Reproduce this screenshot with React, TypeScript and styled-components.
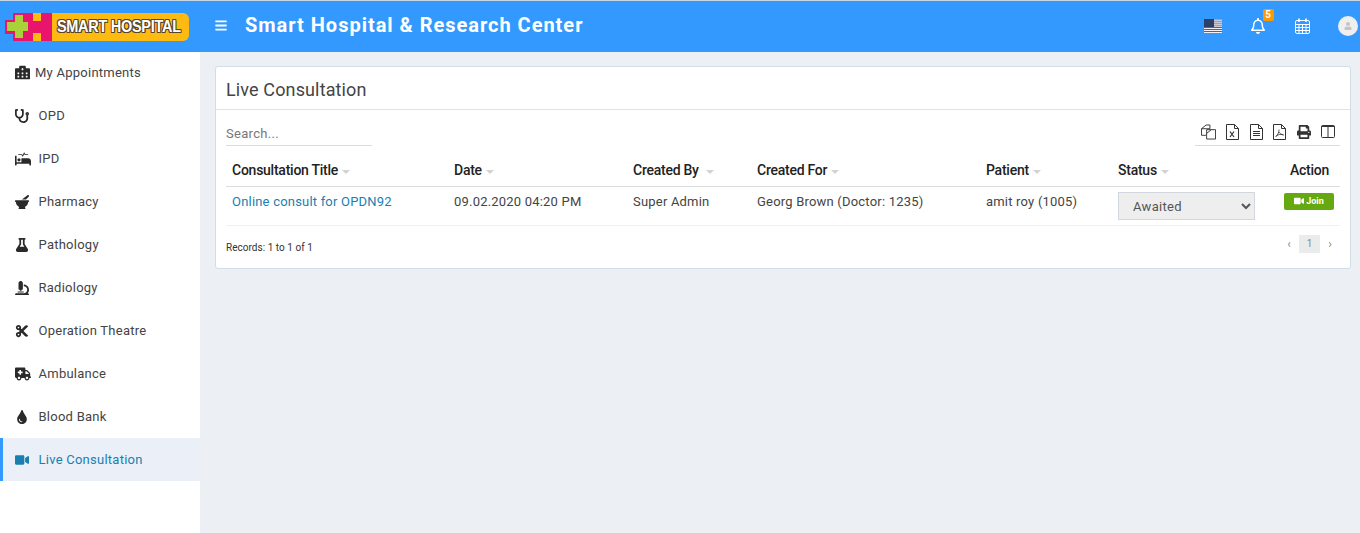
import styled, { createGlobalStyle } from 'styled-components';
import type { ReactNode } from 'react';
import {
  FaBars, FaRegBell, FaHospitalAlt, FaStethoscope, FaProcedures, FaMortarPestle,
  FaFlask, FaMicroscope, FaCut, FaAmbulance, FaTint, FaVideo, FaPrint, FaUser,
} from 'react-icons/fa';

const GlobalStyle = createGlobalStyle`
  html, body { margin: 0; padding: 0; height: 100%; overflow: hidden; }
  body { font-family: Roboto, "Liberation Sans", sans-serif; background: #ecf0f5; color: #333; }
  * { box-sizing: border-box; }
`;

const Page = styled('div')`
  display: flex;
  flex-direction: column;
  height: 533px;
  border-top: 1px solid #c9d6e4;
`;

const Header = styled('header')`
  height: 51px;
  flex: none;
  background: #3399ff;
  display: flex;
  align-items: center;
  color: #fff;
  position: relative;
  z-index: 1;
`;

const Logo = styled('div')`
  width: 200px;
  padding-left: 5px;
  display: flex;
  align-items: center;
`;

const LogoPill = styled('div')`
  height: 28px;
  width: 137px;
  background: #fdbb12;
  border-radius: 0 6px 6px 0;
  display: flex;
  align-items: center;
  justify-content: center;
  padding-right: 3px;
`;

const LogoText = styled('span')`
  font-family: "Liberation Sans", sans-serif;
  font-weight: 700;
  font-size: 17px;
  letter-spacing: -0.3px;
  white-space: nowrap;
  color: #fff;
  transform: scaleX(0.85);
  text-shadow: -1px 0 #54452d, 1px 0 #54452d, 0 -1px #54452d, 0 1px #54452d, 1px 1px #54452d, -1px -1px #54452d, 1px -1px #54452d, -1px 1px #54452d;
`;

const MenuToggle = styled('button')`
  border: 0;
  background: none;
  color: #fff;
  padding: 0;
  margin: 0 0 3px 15px;
  width: 12px;
  height: 14px;
  display: flex;
  font-size: 13px;
  align-items: center;
`;

const Brand = styled('div')`
  margin: 0 0 3px 18px;
  font-size: 20px;
  font-weight: 700;
  letter-spacing: 0.98px;
  white-space: nowrap;
`;

const TopActions = styled('div')`
  margin: 0 0 1px auto;
  display: flex;
  align-items: center;
`;

const TopAction = styled('div')<{ $width: number }>`
  width: ${props => props.$width}px;
  display: flex;
  justify-content: center;
  align-items: center;
  position: relative;
  font-size: 16px;
`;

const NoticeBadge = styled('span')`
  position: absolute;
  top: -9px;
  right: 6.5px;
  width: 11px;
  height: 12px;
  border-radius: 2px;
  background: #ff9800;
  color: #fff;
  font-size: 10px;
  font-weight: 700;
  line-height: 12px;
  text-align: center;
`;

const Avatar = styled('div')`
  width: 20px;
  height: 20px;
  margin-left: 11px;
  border-radius: 50%;
  background: #efefef;
  color: #c4c4c4;
  font-size: 8px;
  display: flex;
  align-items: center;
  justify-content: center;
`;

const Body = styled('div')`
  display: flex;
  flex: 1;
  min-height: 0;
`;

const Sidebar = styled('nav')`
  width: 200px;
  flex: none;
  background: #fff;
`;

const Menu = styled('ul')`
  list-style: none;
  margin: -1px 0 0;
  padding: 0;
`;

const MenuItem = styled('li')<{ $active?: boolean }>`
  height: 43px;
  display: flex;
  align-items: center;
  padding-left: ${props => props.$active ? 12 : 15}px;
  border-left: ${props => props.$active ? '3px solid #3399ff' : '0'};
  background: ${props => props.$active ? '#ebeff7' : 'transparent'};
  color: ${props => props.$active ? '#187fb0' : '#444'};
  font-size: 13px;
  letter-spacing: 0.25px;
  white-space: nowrap;
`;

const MenuIcon = styled('span')<{ $wide?: boolean; $size?: number; $active?: boolean }>`
  width: ${props => props.$wide ? 20 : 23.5}px;
  flex: none;
  display: flex;
  align-items: center;
  font-size: ${props => props.$size ?? 14}px;
  color: ${props => props.$active ? '#187fb0' : '#2a2a2a'};
`;

const Main = styled('main')`
  flex: 1;
  padding: 14px 9px 0 15px;
`;

const Card = styled('section')`
  background: #fff;
  border: 1px solid #d2dde6;
  border-radius: 3px;
`;

const CardHeader = styled('div')`
  height: 43px;
  padding: 2px 0 0 10px;
  display: flex;
  align-items: center;
  border-bottom: 1px solid #dfe3e7;
`;

const CardTitle = styled('h3')`
  margin: 0;
  font-size: 18px;
  font-weight: 400;
  letter-spacing: 0.13px;
  color: #444;
`;

const CardBody = styled('div')`
  padding: 0 10px;
`;

const TableTools = styled('div')`
  display: flex;
  justify-content: space-between;
  align-items: flex-end;
  height: 36px;
`;

const SearchInput = styled('input')`
  width: 146px;
  height: 25px;
  border: 0;
  border-bottom: 1px solid #dcdcdc;
  padding: 0;
  outline: 0;
  font: 400 13px Roboto, sans-serif;
  letter-spacing: 0.3px;
  &::placeholder { color: #777; opacity: 1; }
`;

const ExportButtons = styled('div')`
  width: 145px;
  height: 27px;
  display: flex;
  justify-content: flex-end;
  align-items: flex-start;
  gap: 8.8px;
  padding: 5px 5px 0 0;
  border-bottom: 1px solid #dcdcdc;
  color: #333;
`;

const ExportButton = styled('span')`
  width: 15px;
  height: 15px;
  display: flex;
  justify-content: center;
  align-items: center;
  font-size: 14px;
`;

const Table = styled('table')`
  width: 100%;
  border-collapse: collapse;
  table-layout: fixed;
`;

const Th = styled('th')<{ $width: number; $right?: boolean }>`
  width: ${props => props.$width}px;
  height: 40px;
  padding: 9px 6px 0;
  border-bottom: 1px solid #ddd;
  font-size: 14px;
  font-weight: 500;
  letter-spacing: -0.25px;
  color: #222;
  text-align: ${props => props.$right ? 'right' : 'left'};
  padding-right: ${props => props.$right ? 11 : 6}px;
  white-space: nowrap;
`;

const SortCaret = styled('span')<{ $gap?: number }>`
  display: inline-block;
  margin-left: ${props => props.$gap ?? 4}px;
  vertical-align: middle;
  width: 0;
  height: 0;
  border-left: 4.5px solid transparent;
  border-right: 4.5px solid transparent;
  border-top: 4.5px solid #d2d2d2;
`;

const Td = styled('td')`
  height: 39px;
  padding: 0 6px 9px;
  font-size: 13px;
  letter-spacing: 0.2px;
  color: #444;
  border-bottom: 1px solid #f0f0f0;
  white-space: nowrap;
  vertical-align: middle;
`;

const SelectTd = styled(Td)`
  padding-top: 5px;
  padding-bottom: 5px;
`;

const ActionTd = styled(Td)`
  text-align: right;
`;

const Link = styled('a')`
  color: #187fb0;
  text-decoration: none;
`;

const StatusSelect = styled('select')`
  width: 137px;
  height: 28px;
  border: 1px solid #d2d6de;
  background: #eee;
  color: #555;
  font: 400 13px Roboto, sans-serif;
  letter-spacing: 0.3px;
  padding: 2px 0 0 10px;
  border-radius: 0;
`;

const JoinButton = styled('button')`
  width: 50px;
  height: 17px;
  border: 0;
  border-radius: 2px;
  background: #66a80f;
  color: #fff;
  font: 700 9px Roboto, sans-serif;
  display: inline-flex;
  align-items: center;
  justify-content: center;
  gap: 2px;
  padding: 0;
  & svg { width: 10px; height: 10px; }
`;

const TableFooter = styled('div')`
  height: 42px;
  padding-top: 2px;
  display: flex;
  justify-content: space-between;
  align-items: center;
  font-size: 10px;
  letter-spacing: 0.03px;
  color: #333;
`;

const Pager = styled('div')`
  display: flex;
  align-items: center;
  font-size: 10px;
  color: #888;
  margin: 0 2.5px 8px 0;
`;

const PageArrow = styled('span')`
  width: 15px;
  text-align: center;
  font-size: 12px;
`;

const PageNumber = styled('span')`
  width: 21px;
  height: 18px;
  background: #eaecec;
  text-align: center;
  line-height: 18px;
  margin: 0 2.5px;
`;

const FlagIcon = () => (
  <svg width="18" height="14" viewBox="0 0 18 14">
    {[0, 1, 2, 3, 4, 5, 6].map((i) => (
      <rect key={i} x="0" y={i * 2} width="18" height="1" fill="#c0394b" />
    ))}
    {[0, 1, 2, 3, 4, 5, 6].map((i) => (
      <rect key={i} x="0" y={i * 2 + 1} width="18" height="1" fill="#f2eef2" />
    ))}
    <rect x="10" y="0" width="8" height="8" fill="#b9bccb" opacity="0.7" />
    <rect x="0" y="0" width="10" height="8" fill="#2f4068" />
  </svg>
);

const LogoMark = () => (
  <svg width="47" height="28" viewBox="0 0 47 28">
    <path d="M8 0h39v28H8v-7H0V7h8z" fill="#e9156d" />
    <rect x="28" y="0" width="8" height="8" fill="#fdbb12" />
    <rect x="28" y="20" width="8" height="8" fill="#fdbb12" />
    <path d="M10 2h8v7h5v9h-5v7h-8v-7H2V9h8z" fill="#a8d13a" />
  </svg>
);

const CalendarIcon = () => (
  <svg width="15" height="16" viewBox="0 0 15 16" fill="none" stroke="#fff">
    <rect x="0.5" y="2.500" width="14" height="13" rx="1.500" />
    <path d="M0.500 6.500h14M0.500 9.500h14M0.500 12.500h14M4 6.500v9M7.500 6.500v9M11 6.500v9" />
    <path d="M4 0.500v3.500M11 0.500v3.500" strokeWidth="1.600" />
  </svg>
);

const FileShape = ({ children }: { children?: ReactNode }) => (
  <svg width="13" height="16" viewBox="0 0 13 16" fill="none" stroke="#333">
    <path d="M0.500 0.500h8l4 4v11h-12zM8.500 0.500v4h4" />
    {children}
  </svg>
);

const CopyIcon = () => (
  <svg width="16" height="16" viewBox="0 0 16 16" fill="none" stroke="#333">
    <path d="M5.500 0.500h4v4h-4l-5 0v7h5" />
    <path d="M5.500 0.500l-5 4" />
    <path d="M6 5.500h9.500v10h-9.500zM11 5.500l-5 4" />
  </svg>
);

const ColumnsIcon = () => (
  <svg width="14" height="13" viewBox="0 0 14 13" fill="none" stroke="#333">
    <rect x="0.500" y="0.500" width="13" height="12" rx="1" />
    <path d="M7 0.500v12M0.500 1.500h13" />
  </svg>
);

const menu: { label: string; icon: ReactNode; wide?: boolean; size?: number }[] = [
  { label: 'My Appointments', icon: <FaHospitalAlt />, wide: true, size: 15 },
  { label: 'OPD', icon: <FaStethoscope /> },
  { label: 'IPD', icon: <FaProcedures />, size: 16 },
  { label: 'Pharmacy', icon: <FaMortarPestle /> },
  { label: 'Pathology', icon: <FaFlask /> },
  { label: 'Radiology', icon: <FaMicroscope /> },
  { label: 'Operation Theatre', icon: <FaCut /> },
  { label: 'Ambulance', icon: <FaAmbulance />, size: 16 },
  { label: 'Blood Bank', icon: <FaTint /> },
];

const App = () => {
  return (
    <Page>
      <GlobalStyle />
      <Header>
        <Logo>
          <LogoMark />
          <LogoPill><LogoText>SMART HOSPITAL</LogoText></LogoPill>
        </Logo>
        <MenuToggle><FaBars /></MenuToggle>
        <Brand>Smart Hospital &amp; Research Center</Brand>
        <TopActions>
          <TopAction $width={45}><FlagIcon /></TopAction>
          <TopAction $width={45}><FaRegBell /><NoticeBadge>5</NoticeBadge></TopAction>
          <TopAction $width={45}><CalendarIcon /></TopAction>
          <TopAction $width={35}><Avatar><FaUser /></Avatar></TopAction>
        </TopActions>
      </Header>
      <Body>
        <Sidebar>
          <Menu>
            {menu.map((item) => (
              <MenuItem key={item.label}>
                <MenuIcon $wide={item.wide} $size={item.size}>{item.icon}</MenuIcon>
                {item.label}
              </MenuItem>
            ))}
            <MenuItem $active>
              <MenuIcon $active><FaVideo /></MenuIcon>
              Live Consultation
            </MenuItem>
          </Menu>
        </Sidebar>
        <Main>
          <Card>
            <CardHeader><CardTitle>Live Consultation</CardTitle></CardHeader>
            <CardBody>
              <TableTools>
                <SearchInput placeholder="Search..." />
                <ExportButtons>
                  <ExportButton><CopyIcon /></ExportButton>
                  <ExportButton>
                    <FileShape>
                      <path d="M4 7.500l4 5.500M8 7.500l-4 5.500" strokeWidth="1.200" />
                    </FileShape>
                  </ExportButton>
                  <ExportButton>
                    <FileShape>
                      <path d="M3 7.500h7M3 9.500h7M3 11.500h7" />
                    </FileShape>
                  </ExportButton>
                  <ExportButton>
                    <FileShape>
                      <path d="M6 5.500c0 3-1.500 6-3.500 7.500M6 8c1 2 2.500 3 5 3M3 12c2-1.500 5-2 7-1.500" strokeWidth="0.800" />
                    </FileShape>
                  </ExportButton>
                  <ExportButton><FaPrint /></ExportButton>
                  <ExportButton><ColumnsIcon /></ExportButton>
                </ExportButtons>
              </TableTools>
              <Table>
                <thead>
                  <tr>
                    <Th $width={222}>Consultation Title<SortCaret /></Th>
                    <Th $width={179}>Date<SortCaret /></Th>
                    <Th $width={124}>Created By<SortCaret $gap={7} /></Th>
                    <Th $width={229}>Created For<SortCaret /></Th>
                    <Th $width={132}>Patient<SortCaret /></Th>
                    <Th $width={146}>Status<SortCaret /></Th>
                    <Th $width={82} $right>Action</Th>
                  </tr>
                </thead>
                <tbody>
                  <tr>
                    <Td><Link href="#">Online consult for OPDN92</Link></Td>
                    <Td>09.02.2020 04:20 PM</Td>
                    <Td>Super Admin</Td>
                    <Td>Georg Brown (Doctor: 1235)</Td>
                    <Td>amit roy (1005)</Td>
                    <SelectTd>
                      <StatusSelect defaultValue="Awaited">
                        <option>Awaited</option>
                        <option>Cancelled</option>
                        <option>Finished</option>
                      </StatusSelect>
                    </SelectTd>
                    <ActionTd><JoinButton><FaVideo />Join</JoinButton></ActionTd>
                  </tr>
                </tbody>
              </Table>
              <TableFooter>
                <span>Records: 1 to 1 of 1</span>
                <Pager>
                  <PageArrow>‹</PageArrow>
                  <PageNumber>1</PageNumber>
                  <PageArrow>›</PageArrow>
                </Pager>
              </TableFooter>
            </CardBody>
          </Card>
        </Main>
      </Body>
    </Page>
  );
};

export default App;
